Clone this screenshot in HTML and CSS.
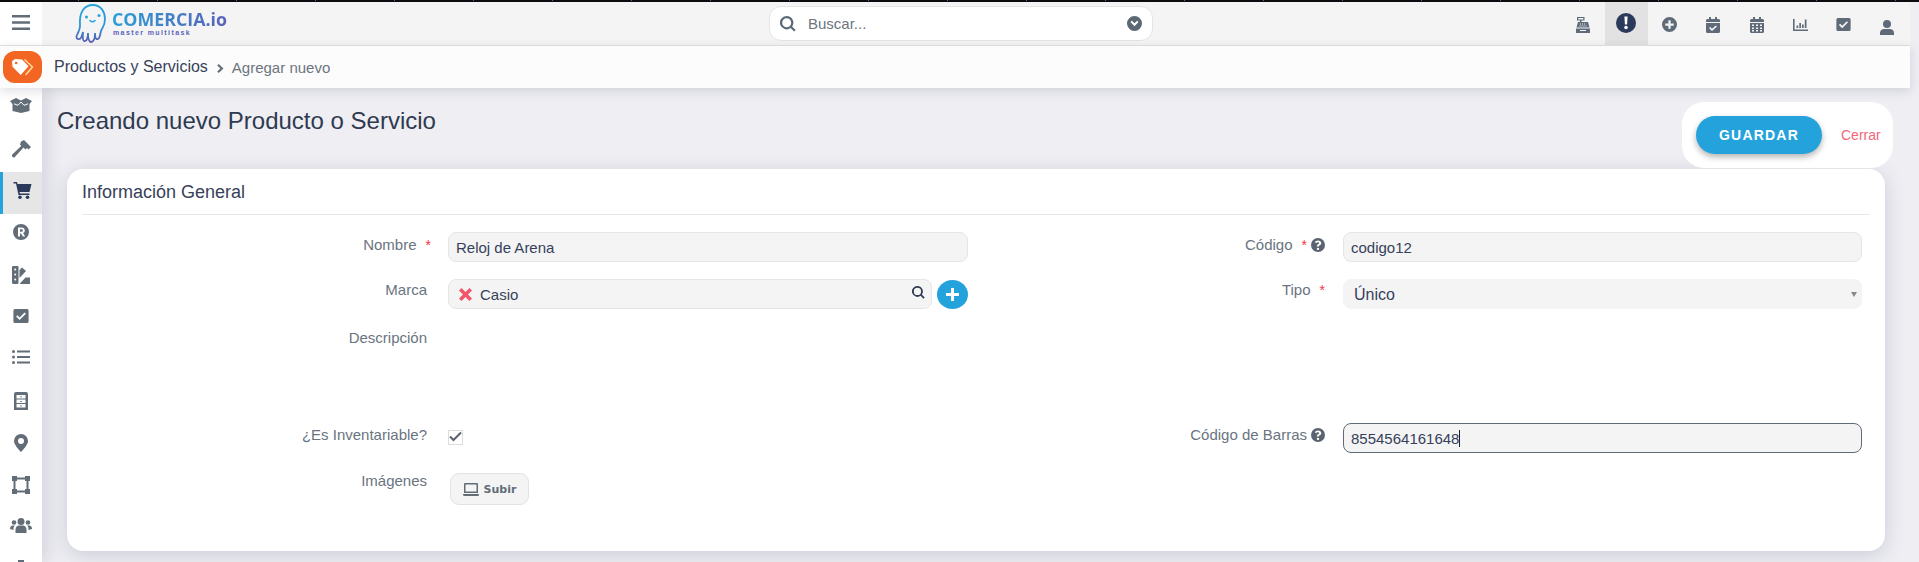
FILE: index.html
```html
<!DOCTYPE html>
<html lang="es">
<head>
    <meta charset="UTF-8">
    <title>Agregar nuevo</title>
    <link rel="stylesheet" href="styles.css">
</head>
<body>
<svg class="defs" width="0" height="0">
    <symbol id="i-check-square" viewBox="0 0 16 16"><path fill-rule="evenodd" d="M2 1h12a1.600 1.600 0 0 1 1.600 1.600v10.800A1.600 1.600 0 0 1 14 15H2a1.600 1.600 0 0 1-1.600-1.600V2.600A1.600 1.600 0 0 1 2 1zm4.600 11 6.300-6.300-1.300-1.300-5 5-2.200-2.200-1.300 1.300z"/></symbol>
    <symbol id="i-help" viewBox="0 0 16 16"><path fill-rule="evenodd" d="M8 0a8 8 0 1 1 0 16A8 8 0 0 1 8 0zm0 11a1.400 1.400 0 1 0 0 2.800A1.400 1.400 0 0 0 8 11zM8.200 2.800c-1.900 0-3.100.9-3.800 2l1.500 1.200c.5-.6 1-1.100 2-1.100.8 0 1.400.4 1.400 1 0 .5-.4.8-1.100 1.200-.9.500-1.500 1-1.500 2.200v.500h2.300v-.3c0-.5.300-.7 1-1.100.9-.5 1.700-1.200 1.700-2.500 0-2-1.900-3.100-3.500-3.100z"/></symbol>
</svg>

<div class="top-strip"></div>

<header class="topbar">
    <button class="menu-btn" aria-label="menu">
        <svg width="18" height="15" viewBox="0 0 18 15"><path d="M0 0h18v2.600H0zM0 6.200h18v2.600H0zM0 12.400h18V15H0z"/></svg>
    </button>
    <a class="logo">
        <svg class="logo-mark" width="31" height="39" viewBox="0 0 31 39" fill="none">
            <defs>
                <linearGradient id="lg" x1="0" y1="0" x2="0" y2="1">
                    <stop offset="0" stop-color="#25a4dc"/>
                    <stop offset=".55" stop-color="#2f95d6"/>
                    <stop offset="1" stop-color="#5c5cb4"/>
                </linearGradient>
            </defs>
            <path stroke="url(#lg)" stroke-width="1.800" d="M5 22C4 8 9 1 18 1c8 0 12 7 12 14 0 7-3 9-4 12-1 4-1 7-3 8-3 1-3-4-3-6 0 4-1 9-4 9-3 0-3-6-3-9 0 4-1 9-4 8-2-1-1-6-1-9-1 4-2 8-5 7-3-1-1-4 0-6 1-2 2-4 2-7z"/>
            <circle cx="11.500" cy="13" r="1.500" fill="#25a4dc"/>
            <circle cx="24" cy="11.500" r="1.500" fill="#25a4dc"/>
            <path stroke="#25a4dc" stroke-width="1.600" stroke-linecap="round" d="M15 16.500c1.500 1.500 3.500 1.500 5 0"/>
        </svg>
        <span class="logo-text">
            <span class="logo-name">COMERCIA.io</span>
            <span class="logo-sub">master multitask</span>
        </span>
    </a>
    <div class="search">
        <svg width="16" height="16" viewBox="0 0 16 16" class="search-ico"><path fill-rule="evenodd" d="M6.700 0a6.700 6.700 0 0 1 5.400 10.600l3.500 3.500-1.500 1.500-3.500-3.500A6.700 6.700 0 1 1 6.700 0zm0 2.200a4.500 4.500 0 1 0 0 9 4.500 4.500 0 0 0 0-9z"/></svg>
        <span class="search-text">Buscar...</span>
        <svg width="15" height="15" viewBox="0 0 16 16" class="search-ico"><path fill-rule="evenodd" d="M8 0a8 8 0 1 1 0 16A8 8 0 0 1 8 0zM3.700 6.500 8 10.800l4.300-4.300-1.500-1.500L8 7.800 5.200 5z"/></svg>
    </div>
    <nav class="top-icons">
        <a class="top-icon"><svg width="16" height="16" viewBox="0 0 16 16"><path fill-rule="evenodd" d="M2 0h7.500v3.500H6.500V5H13l1.500 5.500h-13L3 5h2V3.500H2zM3.200 1v1.500h5.100V1zM1 11.500h14V16H1z"/><path fill="#f4f4f5" d="M5 6.500h1v1H5zm2 0h1v1H7zm2 0h1v1H9zM4.500 8.500h1v1h-1zm2 0h1v1h-1zm2 0h1v1h-1zm2 0h1v1h-1zM5 13h6v1H5z"/></svg></a>
        <a class="top-icon active"><svg width="20" height="20" viewBox="0 0 20 20"><circle cx="10" cy="10" r="10"/><path fill="#fff" d="M8.400 3.600h3.200l-.5 8H8.900zM10 12.700a1.800 1.800 0 1 1 0 3.600 1.800 1.800 0 0 1 0-3.600z"/></svg></a>
        <a class="top-icon"><svg width="15" height="15" viewBox="0 0 16 16"><path fill-rule="evenodd" d="M8 0a8 8 0 1 1 0 16A8 8 0 0 1 8 0zM6.800 3.500v3.300H3.500v2.400h3.300v3.300h2.400V9.200h3.300V6.800H9.200V3.500z"/></svg></a>
        <a class="top-icon"><svg width="14" height="16" viewBox="0 0 14 16"><path fill-rule="evenodd" d="M3 0h2v2h4V0h2v2h1.500A1.500 1.500 0 0 1 14 3.500V5H0V3.500A1.500 1.500 0 0 1 1.500 2H3zM0 6h14v8.500a1.500 1.500 0 0 1-1.500 1.500h-11A1.500 1.500 0 0 1 0 14.500zm6 8 5-4.500-1.100-1.100L6 11.800 4.100 10 3 11.100z"/></svg></a>
        <a class="top-icon"><svg width="14" height="16" viewBox="0 0 14 16"><path fill-rule="evenodd" d="M3 0h2v2h4V0h2v2h1.500A1.500 1.500 0 0 1 14 3.500V5H0V3.500A1.500 1.500 0 0 1 1.500 2H3zM0 6h14v8.500a1.500 1.500 0 0 1-1.500 1.500h-11A1.500 1.500 0 0 1 0 14.500zm2 1.500V9h2V7.500zm4 0V9h2V7.500zm4 0V9h2V7.500zM2 10.500V12h2v-1.500zm4 0V12h2v-1.500zm4 0V12h2v-1.500zM2 13v1.500h2V13zm4 0v1.500h2V13zm4 0v1.500h2V13z"/></svg></a>
        <a class="top-icon"><svg width="15" height="12" viewBox="0 0 15 12"><path d="M0 0h1.600v10.400H15V12H0zM3.500 6.500h1.700V9H3.500zm2.800-2.500H8v5H6.300zM9 5.500h1.700V9H9zm2.800-5h1.700V9h-1.700z"/></svg></a>
        <a class="top-icon"><svg width="15" height="15" viewBox="0 0 16 16"><use href="#i-check-square"/></svg></a>
        <a class="top-icon user"><svg width="14" height="15" viewBox="0 0 14 15"><circle cx="7" cy="4" r="4"/><path d="M0 15v-2c0-2.500 2-4 4-4h6c2 0 4 1.500 4 4v2z"/></svg></a>
    </nav>
</header>

<div class="crumbbar">
    <span class="crumb-badge">
        <svg width="24" height="19" viewBox="0 0 24 19"><path fill="#fff" d="M1 3.200 4 1l7 .5 6.500 6.800-7.800 8.700L1.500 8.800z"/><path fill="none" stroke="#ffd9a0" stroke-width="1.500" d="M13.500 1.500l8 7.500-7 8"/><circle cx="5.200" cy="5" r="1.300" fill="#f26522"/></svg>
    </span>
    <span class="crumb-main">Productos y Servicios</span>
    <svg class="crumb-sep" width="7" height="9" viewBox="0 0 7 9"><path d="M1.700 0 6.500 4.500 1.700 9 .2 7.500 3.400 4.500.2 1.500z"/></svg>
    <span class="crumb-sub">Agregar nuevo</span>
</div>

<div class="page">
    <aside class="sidebar">
        <a class="side-item"><svg width="22" height="15" viewBox="0 0 22 15"><path d="M0 3 6 0l5 2.500L16 0l6 3-2.500 3v7L11 15l-8.500-2V6z"/><path fill="none" stroke="#fff" stroke-width="1" d="M4 5.800 8 7.300 11 4l3 3.300 4-1.500"/></svg></a>
        <a class="side-item"><svg width="19" height="18" viewBox="0 0 19 18"><path d="M9 1.500 12 0l7 7-2.500 2.500-1.500-1.500-1.500 1.500-2-2L2.800 17a1.500 1.500 0 0 1-2.300-.2l-.2-.2a1.500 1.500 0 0 1 0-2.100L9.200 6 8 4.500z"/></svg></a>
        <a class="side-item active"><svg width="19" height="17" viewBox="0 0 18 17"><path d="M0 0h3.500l.5 2H18l-2 8H6l.4 1.500H16V13H5L2.500 1.500H0z"/><circle cx="6.500" cy="15.200" r="1.800"/><circle cx="14" cy="15.200" r="1.800"/></svg></a>
        <a class="side-item"><svg width="16" height="16" viewBox="0 0 16 16"><path fill-rule="evenodd" d="M8 0a8 8 0 1 1 0 16A8 8 0 0 1 8 0zM5 3.500v9h2v-3h1l2 3h2.200L10 9.100c1.100-.4 1.800-1.300 1.800-2.600 0-1.900-1.300-3-3.300-3zm2 1.700h1.300c1 0 1.500.5 1.500 1.300S9.300 7.800 8.300 7.800H7z"/></svg></a>
        <a class="side-item"><svg width="18" height="18" viewBox="0 0 18 18"><path fill-rule="evenodd" d="M1 0h4.500a1 1 0 0 1 1 1v15.500a1.500 1.500 0 0 1-1.500 1.500H1.500A1.500 1.500 0 0 1 0 16.500V1a1 1 0 0 1 1-1zm2.200 2.500a1 1 0 1 0 0 2 1 1 0 0 0 0-2zm0 5a1 1 0 1 0 0 2 1 1 0 0 0 0-2zm0 5a1 1 0 1 0 0 2 1 1 0 0 0 0-2zM7.500 4 10 1.500 14 5l-6.500 7zM7.500 18l6-6.500H18V18z"/></svg></a>
        <a class="side-item"><svg width="16" height="16" viewBox="0 0 16 16"><use href="#i-check-square"/></svg></a>
        <a class="side-item"><svg width="18" height="14" viewBox="0 0 18 14"><circle cx="1.500" cy="1.500" r="1.500"/><circle cx="1.500" cy="7" r="1.500"/><circle cx="1.500" cy="12.500" r="1.500"/><path d="M5 .5h13v2H5zM5 6h13v2H5zM5 11.500h13v2H5z"/></svg></a>
        <a class="side-item"><svg width="14" height="18" viewBox="0 0 14 18"><path fill-rule="evenodd" d="M2 0h10a2 2 0 0 1 2 2v16H0V2a2 2 0 0 1 2-2zm.500 3v3.500h9V3zm0 4.500V11h9V7.500zm0 4.500v3.500h9V12zM6 4.500h2v.7H6zM6 9h2v.7H6zm0 4.500h2v.7H6z"/></svg></a>
        <a class="side-item"><svg width="14" height="18" viewBox="0 0 14 18"><path fill-rule="evenodd" d="M7 0a7 7 0 0 1 7 7c0 3.500-4.500 8.500-7 11-2.500-2.500-7-7.500-7-11a7 7 0 0 1 7-7zm0 4a3 3 0 1 0 0 6 3 3 0 0 0 0-6z"/></svg></a>
        <a class="side-item"><svg width="18" height="18" viewBox="0 0 18 18"><path fill-rule="evenodd" d="M0 0h5v1.500h8V0h5v5h-1.500v8H18v5h-5v-1.500H5V18H0v-5h1.500V5H0zm3.500 5v8H5v1.500h8V13h1.500V5H13V3.500H5V5z"/></svg></a>
        <a class="side-item"><svg width="22" height="15" viewBox="0 0 22 15"><circle cx="11" cy="3.500" r="3.500"/><circle cx="4" cy="4.500" r="2.300"/><circle cx="18" cy="4.500" r="2.300"/><path d="M5.500 15v-3.500C5.500 9 7.500 7.500 9 7.500h4c1.500 0 3.500 1.500 3.500 4V15zM0 11c0-2 1-3.500 3-3.500h2C3.500 8.500 3.500 10 3.500 12zM22 11c0-2-1-3.500-3-3.500h-2c1.500 1 1.500 2.500 1.500 4.500z"/></svg></a>
        <a class="side-item"><svg width="16" height="16" viewBox="0 0 16 16"><path d="M5 0h6v3h5v13H0V3h5z"/></svg></a>
    </aside>

    <main class="content">
        <div class="page-head">
            <h1 class="page-title">Creando nuevo Producto o Servicio</h1>
            <div class="actions">
                <button class="btn-save">GUARDAR</button>
                <a class="btn-close">Cerrar</a>
            </div>
        </div>

        <section class="card">
            <h2 class="card-title">Información General</h2>
            <div class="form-grid">
                <div class="row row-a">
                    <label class="lbl">Nombre <span class="req">*</span></label>
                    <input class="field" type="text" value="Reloj de Arena">
                </div>
                <div class="row row-a">
                    <label class="lbl">Código <span class="req">*</span><svg class="help" width="14" height="14"><use href="#i-help"/></svg></label>
                    <input class="field" type="text" value="codigo12">
                </div>
                <div class="row row-b">
                    <label class="lbl">Marca</label>
                    <div class="marca">
                        <div class="field lookup">
                            <svg class="x" width="13" height="13" viewBox="0 0 13 13"><path d="M2.500 0 6.500 4 10.500 0 13 2.500 9 6.500l4 4-2.500 2.500-4-4-4 4L0 10.500l4-4-4-4z"/></svg>
                            <span>Casio</span>
                            <svg class="lens" width="13" height="13" viewBox="0 0 16 16"><path fill-rule="evenodd" d="M6.700 0a6.700 6.700 0 0 1 5.400 10.600l3.500 3.500-1.500 1.500-3.500-3.500A6.700 6.700 0 1 1 6.700 0zm0 2.200a4.500 4.500 0 1 0 0 9 4.500 4.500 0 0 0 0-9z"/></svg>
                        </div>
                        <button class="add-btn" aria-label="agregar"><svg width="13" height="13" viewBox="0 0 13 13"><path d="M5 0h3v5h5v3H8v5H5V8H0V5h5z"/></svg></button>
                    </div>
                </div>
                <div class="row row-b">
                    <label class="lbl">Tipo <span class="req">*</span></label>
                    <div class="field select"><span>Único</span><i class="caret"></i></div>
                </div>
                <div class="row row-c">
                    <label class="lbl">Descripción</label>
                </div>
                <div class="row row-c"></div>
                <div class="row row-d">
                    <label class="lbl">¿Es Inventariable?</label>
                    <span class="check"><svg width="13" height="11" viewBox="0 0 13 11"><path d="M1 5.500 4.500 9 12 1.500" fill="none" stroke="#5a6470" stroke-width="2"/></svg></span>
                </div>
                <div class="row row-d">
                    <label class="lbl">Código de Barras <svg class="help" width="14" height="14"><use href="#i-help"/></svg></label>
                    <div class="field focused"><span>8554564161648</span><i class="cursor"></i></div>
                </div>
                <div class="row row-e">
                    <label class="lbl">Imágenes</label>
                    <button class="btn-upload">
                        <svg width="16" height="13" viewBox="0 0 16 13"><path fill-rule="evenodd" d="M2 0h12a1 1 0 0 1 1 1v9H1V1a1 1 0 0 1 1-1zm.500 1.500V8.500h11v-7zM0 11h16v.5a1.500 1.500 0 0 1-1.500 1.500h-13A1.500 1.500 0 0 1 0 11.500z"/></svg>
                        Subir
                    </button>
                </div>
            </div>
        </section>
    </main>
</div>
</body>
</html>
```
FILE: styles.css
```css
* { box-sizing: border-box; }

html, body {
    margin: 0;
    height: 562px;
    overflow: hidden;
}
body {
    background: #eeeef3;
    font-family: "Liberation Sans", Arial, sans-serif;
    color: #2f3a50;
    display: flex;
    flex-direction: column;
}
.defs { position: absolute; }

.top-strip {
    height: 2px;
    flex: none;
    background: repeating-linear-gradient(90deg, #0c0c0e 0 78px, #4a6ea8 78px 79px) top / 100% 1px no-repeat, #0c0c0e;
}

/* top bar */
.topbar {
    height: 44px;
    width: 1910px;
    flex: none;
    display: flex;
    align-items: flex-start;
    background: #f4f4f5;
    border-bottom: 1px solid #e2e2e2;
    position: relative;
}
.menu-btn {
    width: 42px;
    height: 43px;
    border: 0;
    background: #fff;
    padding: 0 0 2px;
    display: flex;
    align-items: center;
    justify-content: center;
}
.menu-btn svg { fill: #626d78; }
.logo {
    display: flex;
    margin-left: 33px;
    width: 180px;
    gap: 6px;
}
.logo-mark { margin-top: 2px; flex: none; }
.logo-text { display: flex; flex-direction: column; padding-top: 7px; }
.logo-name {
    font-family: "Open Sans", sans-serif;
    font-size: 17.800px;
    font-weight: 700;
    line-height: 20px;
    white-space: nowrap;
    background: linear-gradient(90deg, #2a9fd8, #5a62b8);
    -webkit-background-clip: text;
    background-clip: text;
    color: transparent;
}
.logo-sub {
    font-size: 7px;
    font-weight: 700;
    letter-spacing: 1.400px;
    line-height: 8px;
    color: #5a62b8;
    white-space: nowrap;
    padding-left: 1px;
}
.search {
    width: 384px;
    height: 35px;
    margin: 4px 0 0 514px;
    background: #fff;
    border: 1px solid #e4e4e4;
    border-radius: 12px;
    display: flex;
    align-items: center;
    padding: 0 10px;
}
.search-ico { fill: #5c6874; flex: none; }
.search-text {
    flex: 1;
    margin-left: 12px;
    font-size: 15px;
    color: #6d757e;
}
.top-icons {
    margin-left: auto;
    margin-right: 1px;
    display: flex;
}
.top-icon {
    width: 43.500px;
    height: 43px;
    display: flex;
    align-items: center;
    justify-content: center;
    padding-top: 2px;
}
.top-icon svg { fill: #5f6b78; }
.top-icon.active { background: #e2e2e2; padding: 0 0 2px; }
.top-icon.active svg { fill: #2b3a5a; }
.top-icon.user { padding-top: 8px; }

/* breadcrumb */
.crumbbar {
    height: 42px;
    width: 1910px;
    flex: none;
    background: #fcfcfc;
    display: flex;
    align-items: center;
    box-shadow: 0 3px 10px rgba(70, 70, 100, .18);
    position: relative;
    z-index: 2;
}
.crumb-badge {
    width: 39px;
    height: 32px;
    margin-left: 3px;
    background: #f26522;
    border-radius: 12px;
    display: flex;
    align-items: center;
    justify-content: center;
}
.crumb-main { margin-left: 12px; font-size: 16px; color: #37415a; }
.crumb-sep { margin: 2px 8px 0 9px; fill: #626d78; }
.crumb-sub { color: #6d757e; font-size: 15px; }

/* layout under the bars */
.page { flex: 1; display: flex; min-height: 0; }

.sidebar {
    width: 42px;
    flex: none;
    background: #fff;
    overflow: hidden;
    box-shadow: 8px 0 14px rgba(70, 70, 110, .12);
    position: relative;
    z-index: 1;
}
.side-item {
    height: 42px;
    display: flex;
    justify-content: center;
    align-items: flex-start;
    padding-top: 10px;
}
.side-item svg { fill: #626d78; }
.side-item.active {
    background: #e6e6e6;
    border-left: 3px solid #25a3dc;
    padding-right: 1px;
}
.side-item.active svg { fill: #2b3a5a; }

.content { flex: 1; padding-left: 15px; min-width: 0; }
.page-head {
    height: 81px;
    display: flex;
    justify-content: space-between;
    padding-right: 26px;
}
.page-title {
    margin: 20px 0 0;
    font-size: 24px;
    font-weight: 400;
    color: #2f3a50;
    line-height: 26px;
}
.actions {
    width: 211px;
    height: 66px;
    margin-top: 14px;
    background: #fff;
    border-radius: 22px;
    display: flex;
    align-items: center;
    padding: 0 14px;
    position: relative;
    z-index: 1;
}
.btn-save {
    width: 126px;
    height: 38px;
    flex: none;
    border: 0;
    border-radius: 19px;
    background: #24a2dc;
    color: #fff;
    font: 700 14px "Liberation Sans", Arial, sans-serif;
    letter-spacing: 1.200px;
    box-shadow: 0 3px 6px rgba(0, 0, 0, .3);
}
.btn-close { margin-left: 19px; font-size: 14px; color: #f2667a; }

.card {
    width: 1818px;
    height: 382px;
    margin-left: 10px;
    background: #fff;
    border-radius: 16px;
    padding: 0 15px;
    box-shadow: 0 4px 20px rgba(70, 70, 110, .2);
}
.card-title {
    margin: 0;
    height: 46px;
    padding: 13px 0 0;
    font-size: 18px;
    line-height: 20px;
    font-weight: 400;
    color: #37415a;
    border-bottom: 1px solid #e8e8e8;
}
.form-grid {
    display: grid;
    grid-template-columns: 886px 1fr;
    padding-top: 17px;
}
.row {
    display: grid;
    align-items: start;
}
.form-grid > .row:nth-child(odd) { grid-template-columns: 366px 1fr; }
.form-grid > .row:nth-child(even) { grid-template-columns: 375px 1fr; padding-right: 8px; }
.row-a { height: 47px; }
.row-b { height: 47px; }
.row-c { height: 97px; }
.row-d { height: 46px; }

.lbl {
    padding-right: 21px;
    padding-top: 2px;
    font-size: 15px;
    line-height: 20px;
    color: #6a7480;
    display: flex;
    justify-content: flex-end;
    align-items: center;
    gap: 4px;
}
.row-a .lbl { padding-top: 3px; }
.row-b .lbl { padding-top: 1px; }
.form-grid > .row:nth-child(even) .lbl { padding-right: 18px; }
.form-grid > .row:nth-child(odd) .req { margin-right: -4px; }
.req { color: #f2333f; margin-left: 5px; font-size: 14px; }
.help { fill: #5a6470; flex: none; }
.field {
    height: 30px;
    background: #f4f4f5;
    border: 1px solid #e6e6e6;
    border-radius: 8px;
    padding: 0 7px;
    font: 15px "Liberation Sans", Arial, sans-serif;
    color: #37415a;
    outline: 0;
    width: 100%;
    display: flex;
    align-items: center;
}
.marca { display: flex; gap: 5px; align-items: center; }
.lookup { flex: 1; gap: 8px; width: auto; padding-right: 6px; padding-left: 10px; }
.lookup .lens { margin-left: auto; fill: #2f3a50; margin-top: -3px; }
.x { fill: #f2566a; flex: none; }
.add-btn {
    width: 31px;
    height: 29px;
    border-radius: 50%;
    border: 0;
    padding: 0;
    background: #24a2dc;
    flex: none;
    display: flex;
    align-items: center;
    justify-content: center;
}
.add-btn svg { fill: #fff; }
.select {
    border-color: #f4f4f5;
    justify-content: space-between;
    padding: 1px 4px 0 10px;
    font-size: 16px;
}
.caret {
    width: 0;
    height: 0;
    border-left: 3px solid transparent;
    border-right: 3px solid transparent;
    border-top: 5px solid #888;
}
.focused { border-color: #5f6b78; }
.cursor { width: 1px; height: 17px; background: #1a2233; }
.check {
    width: 15px;
    height: 15px;
    margin-top: 7px;
    border: 1px solid #ddd;
    display: flex;
    align-items: center;
    justify-content: center;
}
.check svg { margin-top: -2px; flex: none; }
.btn-upload {
    width: 79px;
    height: 32px;
    margin: 4px 0 0 2px;
    background: #f4f4f5;
    border: 1px solid #e2e2e2;
    border-radius: 9px;
    font: 700 11px "DejaVu Sans", sans-serif;
    color: #626d78;
    display: flex;
    align-items: center;
    justify-content: center;
    gap: 5px;
    padding: 0;
}
.btn-upload svg { fill: #626d78; }
```
